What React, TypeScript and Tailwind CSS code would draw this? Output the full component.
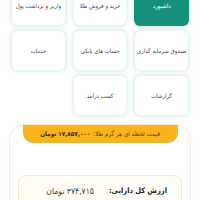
const tiles = [
  { title: 'داشبورد', active: true },
  { title: 'خرید و فروش طلا' },
  { title: 'واریز و برداشت پول' },
  { title: 'صندوق سرمایه گذاری' },
  { title: 'حساب های بانکی' },
  { title: 'خدمات' },
  { title: 'گزارشات' },
  { title: 'کسب درآمد' },
]

export default function App() {
  return (
    <div
      dir="rtl"
      className="w-[200px] h-[200px] overflow-hidden bg-white"
      style={{ fontFamily: '"DejaVu Sans Condensed", "DejaVu Sans", sans-serif' }}
    >
      <div className="grid grid-cols-3 gap-x-[7px] gap-y-[4px] px-[11px] -mt-[15px]">
        {tiles.map((t) => (
          <div
            key={t.title}
            className={
              t.active
                ? 'h-[41px] min-w-0 rounded-[6px] bg-[#13917b] flex items-center justify-center text-white text-[6px] shadow-[0_0_4px_rgba(19,145,123,0.35)]'
                : 'h-[41px] min-w-0 rounded-[6px] bg-white border border-[#e6f4f1] flex items-center justify-center text-[#3f4650] text-[6px] shadow-[0_0_4px_rgba(19,145,123,0.18)] whitespace-nowrap'
            }
          >
            {t.title}
          </div>
        ))}
      </div>

      <div className="mx-[9px] mt-[8px] h-[120px] rounded-[16px] border border-[#eeeeee] bg-white shadow-[0_0_3px_rgba(0,0,0,0.05)] flex flex-col items-center">
        <div className="w-[155px] h-[18px] rounded-b-[10px] bg-[#fab31a] flex items-center justify-center gap-[3px] text-[6.3px] text-[#5a4208] whitespace-nowrap">
          <span>قیمت لحظه ای هر گرم طلا:</span>
          <span className="font-bold text-[#3b2a00]">۱۷,۸۵۷,۰۰۰ تومان</span>
        </div>
        <div className="mt-[32px] w-[164px] h-[40px] rounded-[8px] border border-[#f6ebc4] bg-[#fffdf6] flex items-start pt-[9px] pr-[14px] gap-[15px] whitespace-nowrap">
          <span className="text-[7.5px] font-bold text-[#222222]">ارزش کل دارایی:</span>
          <span className="text-[8.5px] text-[#444444]">۳۷۴,۷۱۵ تومان</span>
        </div>
      </div>
    </div>
  )
}
